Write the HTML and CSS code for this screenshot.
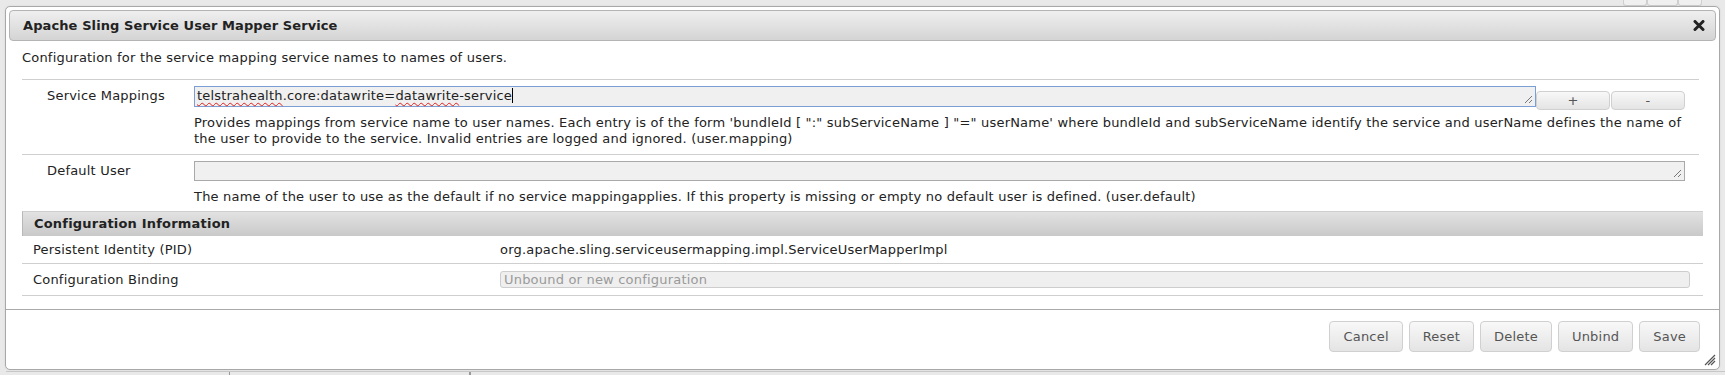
FILE: index.html
```html
<!DOCTYPE html>
<html>
<head>
  <title>Apache Sling Service User Mapper Service</title>
  <meta charset="UTF-8">
  <link rel="stylesheet" href="styles.css">
</head>
<body>

  <!-- page behind the dialog -->
  <div class="page">
    <div class="page-tools">
      <span class="tool"></span>
      <span class="tool wide"></span>
      <span class="tool"></span>
    </div>
    <div class="page-table">
      <span class="cell first"></span>
      <span class="cell second"></span>
      <span class="cell"></span>
    </div>
  </div>

  <div class="dialog">
    <div class="titlebar">
      <span class="title">Apache Sling Service User Mapper Service</span>
      <svg class="close" width="12" height="11" viewBox="0 0 12 11">
        <path d="M2 1.5 L10 9.5 M10 1.5 L2 9.5" stroke="#222" stroke-width="3" stroke-linecap="round"/>
      </svg>
    </div>

    <div class="content">
      <p class="intro">Configuration for the service mapping service names to names of users.</p>

      <div class="props">
        <div class="prop">
          <div class="prop-name">Service Mappings</div>
          <div class="prop-value">
            <div class="multi">
              <div class="field focused">
                <span class="spell">telstrahealth</span>.core:datawrite=<span class="spell">datawrite</span>-service<span class="caret"></span>
                <svg class="grip" width="9" height="9" viewBox="0 0 9 9">
                  <path d="M1 8 L8 1 M5 8 L8 5" stroke="#777" stroke-width="1"/>
                </svg>
              </div>
              <button class="small">+</button>
              <button class="small">-</button>
            </div>
            <div class="prop-desc">Provides mappings from service name to user names. Each entry is of the form 'bundleId [ ":" subServiceName ] "=" userName' where bundleId and subServiceName identify the service and userName defines the name of the user to provide to the service. Invalid entries are logged and ignored. (user.mapping)</div>
          </div>
        </div>

        <div class="prop">
          <div class="prop-name">Default User</div>
          <div class="prop-value">
            <div class="field">
              <svg class="grip" width="9" height="9" viewBox="0 0 9 9">
                <path d="M1 8 L8 1 M5 8 L8 5" stroke="#777" stroke-width="1"/>
              </svg>
            </div>
            <div class="prop-desc">The name of the user to use as the default if no service mappingapplies. If this property is missing or empty no default user is defined. (user.default)</div>
          </div>
        </div>
      </div>

      <div class="info-head">Configuration Information</div>
      <div class="info-row">
        <div class="info-name">Persistent Identity (PID)</div>
        <div class="info-value">org.apache.sling.serviceusermapping.impl.ServiceUserMapperImpl</div>
      </div>
      <div class="info-row">
        <div class="info-name">Configuration Binding</div>
        <div class="info-value">
          <div class="select">Unbound or new configuration</div>
        </div>
      </div>
    </div>

    <div class="buttonpane">
      <button>Cancel</button>
      <button>Reset</button>
      <button>Delete</button>
      <button>Unbind</button>
      <button>Save</button>
    </div>

    <svg class="resize" width="12" height="12" viewBox="0 0 12 12">
      <path d="M1 11 L11 1 M4 11 L11 4 M7 11 L11 7" stroke="#555" stroke-width="1.2"/>
    </svg>
  </div>

</body>
</html>
```

FILE: styles.css
```css
/* Reset styles */
* {
  margin: 0;
  padding: 0;
  box-sizing: border-box;
}

/* Base styles */
body {
  font-family: 'DejaVu Sans', Verdana, sans-serif;
  font-size: 13px;
  letter-spacing: 0.2px;
  line-height: 16px;
  color: #222;
  background-color: #e9e9e9;
  width: 1725px;
  height: 375px;
  overflow: hidden;
}

button {
  font-family: inherit;
  font-size: 13px;
  letter-spacing: 0.2px;
  color: #555;
  background: linear-gradient(#f8f8f8, #e4e4e4);
  border: 1px solid #d0d0d0;
  border-radius: 4px;
  cursor: pointer;
}

/* Page behind the dialog */
.page-tools {
  display: flex;
  justify-content: flex-end;
  height: 6px;
  padding-right: 23px;
}

.tool {
  width: 24px;
  height: 6px;
  border: 1px solid #cfcfcf;
  border-top: none;
  border-radius: 0 0 3px 3px;
  background-color: #f0f0f0;
}

.tool.wide {
  width: 31px;
}

.page-table {
  display: flex;
  margin-top: 365px;
  height: 4px;
  border-top: 1px solid #c8c8c8;
  margin-left: 6px;
}

.cell {
  border-right: 1px solid #999;
  height: 3px;
}

.cell.first {
  width: 224px;
}

.cell.second {
  width: 240px;
}

/* Dialog */
.dialog {
  position: absolute;
  left: 5px;
  top: 6px;
  width: 1715px;
  height: 364px;
  padding: 3px;
  background-color: #fff;
  border: 1px solid #a8a8a8;
  border-radius: 5px;
  box-shadow: 0 0 2px rgba(0, 0, 0, 0.1);
}

.titlebar {
  display: flex;
  align-items: center;
  justify-content: space-between;
  height: 31px;
  padding: 0 10px 0 13px;
  border: 1px solid #b4b4b4;
  border-radius: 4px;
  background: linear-gradient(#efefef, #d4d4d4);
}

.title {
  font-weight: 700;
  font-size: 13px;
  letter-spacing: 0.1px;
  color: #222;
}

.close {
  display: block;
}

.content {
  padding: 9px 13px 0 13px;
}

.intro {
  margin-bottom: 13px;
}

/* Properties table */
.props {
  margin-right: 4px;
}

.prop {
  display: flex;
  border-top: 1px solid #cfcfcf;
  padding: 6px 14px 7px 0;
}

.prop + .prop {
  padding-bottom: 6px;
}

.prop-name {
  width: 172px;
  flex-shrink: 0;
  padding: 2px 0 0 25px;
}

.prop-value {
  flex: 1;
}

.multi {
  display: flex;
  align-items: flex-start;
  height: 21px;
}

.field {
  position: relative;
  height: 20px;
  padding: 1px 2px;
  background-color: #f0f0f0;
  border: 1px solid #a9a9a9;
  white-space: nowrap;
}

.multi .field {
  width: 1342px;
  height: 21px;
}

.field.focused {
  border-color: #7b9ed4;
}

.spell {
  text-decoration: underline wavy #e02020;
  text-decoration-thickness: 1px;
  text-underline-offset: 2px;
}

.caret {
  display: inline-block;
  width: 1px;
  height: 15px;
  background-color: #000;
  vertical-align: -3px;
}

.grip {
  position: absolute;
  right: 2px;
  bottom: 2px;
}

.small {
  flex-shrink: 0;
  width: 74px;
  height: 19px;
  margin-top: 5px;
  line-height: 14px;
}

.small + .small {
  flex: 1;
  margin-left: 1px;
}

.prop-desc {
  margin-top: 8px;
}

/* Configuration information */
.info-head {
  height: 25px;
  padding: 4px 11px 0;
  font-weight: 700;
  border-top: 1px solid #cfcfcf;
  border-left: 1px solid #b8b8b8;
  background: linear-gradient(#e2e2e2, #c9c9c9);
}

.info-row {
  display: flex;
  align-items: center;
  border-bottom: 1px solid #cfcfcf;
  height: 28px;
}

.info-row + .info-row {
  height: 32px;
}

.info-name {
  width: 478px;
  flex-shrink: 0;
  padding-left: 11px;
}

.info-value {
  flex: 1;
  padding-right: 13px;
}

.select {
  height: 17px;
  padding: 0 3px;
  line-height: 15px;
  color: #9a9a9a;
  background-color: #efefef;
  border: 1px solid #cdcdcd;
  border-radius: 3px;
}

/* Button pane */
.buttonpane {
  display: flex;
  justify-content: flex-end;
  gap: 6px;
  margin: 13px -3px 0;
  padding: 11px 19px 0 0;
  border-top: 1px solid #aaa;
}

.buttonpane button {
  height: 31px;
  padding: 0 13px;
}

.resize {
  position: absolute;
  right: 3px;
  bottom: 3px;
}
```
